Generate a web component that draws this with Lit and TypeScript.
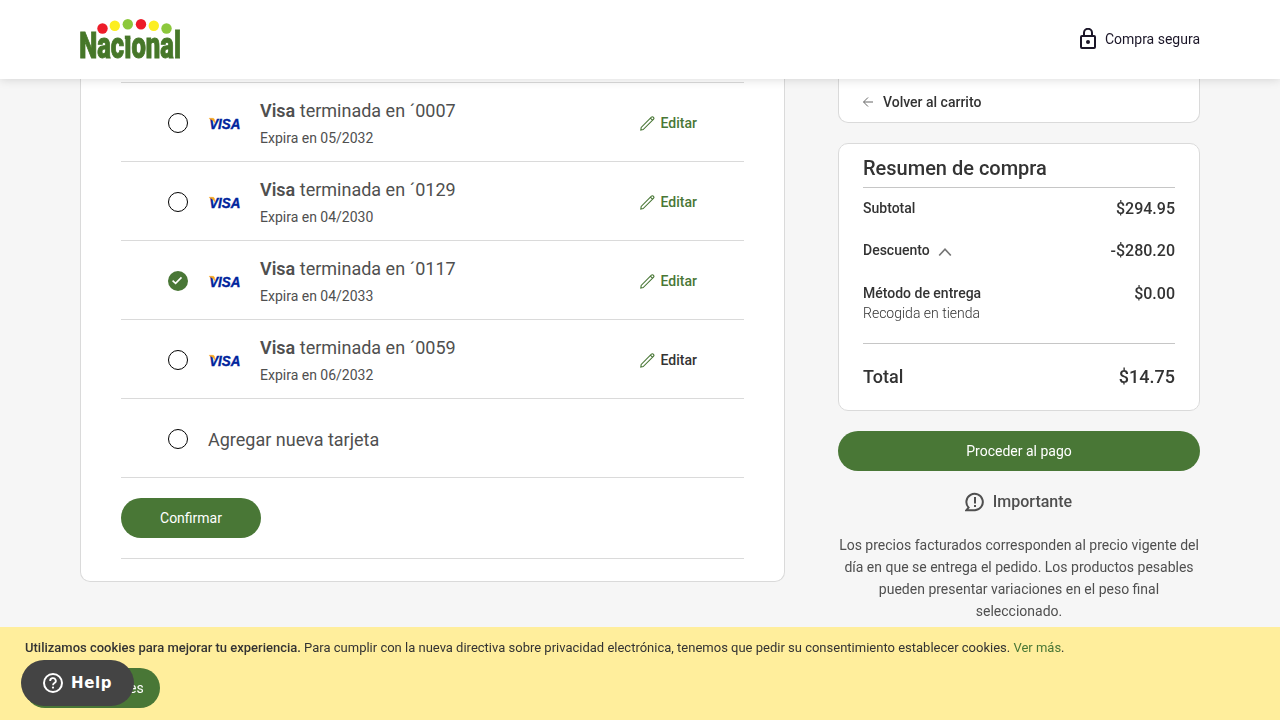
import { LitElement, html, css, svg } from "lit";
import { customElement, property, state } from "lit/decorators.js";
import { classMap } from "lit/directives/class-map.js";

interface Card {
  digits: string;
  expires: string;
}

const CARDS: Card[] = [
  { digits: "0007", expires: "05/2032" },
  { digits: "0129", expires: "04/2030" },
  { digits: "0117", expires: "04/2033" },
  { digits: "0059", expires: "06/2032" },
];

const LOGO_DOTS: [number, number, string][] = [
  [22.5, 9.5, "#ed1c29"],
  [34.8, 6.8, "#fcee21"],
  [47.8, 5.2, "#8cc83c"],
  [61, 5.2, "#ed1c29"],
  [73.8, 6.8, "#fcee21"],
  [86.5, 9.5, "#8cc83c"],
];

@customElement("site-logo")
class SiteLogo extends LitElement {
  static styles = css`
    :host { display: block; width: 101px; height: 42px; }
    svg { display: block; overflow: visible; }
    text { font-family: Roboto, sans-serif; font-weight: 900; font-size: 37.5px; fill: #467729; stroke: #467729; stroke-width: 1; }
  `;
  render() {
    return html`<svg width="101" height="42" viewBox="0 0 101 42">
      <text x="-0.8" y="39.4" textLength="101.8" lengthAdjust="spacingAndGlyphs">Nacıonal</text>
      <rect x="44.8" y="16.6" width="5.6" height="3.4" fill="#467729" />
      ${LOGO_DOTS.map(([x, y, c]) => svg`<circle cx=${x} cy=${y} r="5.2" fill=${c} />`)}
    </svg>`;
  }
}

@customElement("visa-mark")
class VisaMark extends LitElement {
  static styles = css`
    :host { display: block; width: 32px; height: 12px; }
    svg { display: block; overflow: visible; }
    text { font-family: "Liberation Sans", sans-serif; font-weight: 700; font-style: italic; font-size: 14.5px; fill: #00249c; stroke: #00249c; stroke-width: 0.4; }
  `;
  render() {
    return html`<svg width="32" height="12" viewBox="0 0 32 12">
      <text x="1.2" y="11.6" textLength="31.2" lengthAdjust="spacingAndGlyphs">VISA</text>
      <path d="M1 1.2H5Q6.2 1.2 6.5 2.4L7.2 6.2Q5.2 2.6 1 1.5Z" fill="#faa61a" stroke="#faa61a" stroke-width=".3" />
    </svg>`;
  }
}

@customElement("card-row")
class CardRow extends LitElement {
  @property({ attribute: false }) card?: Card;
  @property({ type: Boolean }) checked = false;
  @property({ type: Boolean }) dark = false;

  static styles = css`
    :host { display: flex; align-items: center; height: 79px; box-sizing: border-box; border-bottom: 1px solid #dadada; padding: 0 47px; }
    .radio { box-sizing: border-box; width: 20px; height: 20px; border: 1px solid #000; border-radius: 50%; margin: 2px 20px 0 0; background: #fff; flex: none; }
    .on { border: 0; background: #497736; }
    .radio svg { display: block; }
    visa-mark { margin: 2px 20px 0 0; }
    .info { flex: 1; color: #4f4f4f; margin-top: 4px; }
    .name { font-size: 18px; line-height: 28px; }
    .name b { font-weight: 600; }
    .exp { font-size: 14px; line-height: 26px; }
    .new { font-size: 18px; line-height: 28px; }
    .edit { display: flex; align-items: center; gap: 6px; margin-top: 2px; font-size: 14px; line-height: 20px; font-weight: 500; color: #497736; }
    .edit svg { display: block; }
    .dark { color: #333; }
  `;

  render() {
    return html`
      <span class=${classMap({ radio: true, on: this.checked })}>
        ${this.checked
          ? html`<svg width="20" height="20" viewBox="0 0 20 20"><path d="M4.6 9.6 7.6 12.4 13.5 6.4" fill="none" stroke="#fff" stroke-width="1.6" /></svg>`
          : null}
      </span>
      ${this.card
        ? html`<visa-mark></visa-mark>
            <div class="info">
              <div class="name"><b>Visa</b> terminada en ´${this.card.digits}</div>
              <div class="exp">Expira en ${this.card.expires}</div>
            </div>
            <span class=${classMap({ edit: true, dark: this.dark })}>
              <svg width="15" height="15" viewBox="0 0 15 15" fill="none" stroke="#497736" stroke-width="1.1">
                <path d="M.8 14 1.2 11.4 11.4 1.2Q12.2 .4 13 1L13.6 1.6Q14.4 2.4 13.4 3.4L3.2 13.6ZM10.4 2.2 12.4 4.2" />
              </svg>Editar</span>`
        : html`<div class="info new">Agregar nueva tarjeta</div>`}
    `;
  }
}

@customElement("app-root")
class AppRoot extends LitElement {
  @state() private selected = 2;

  static styles = css`
    :host { display: flex; flex-direction: column; width: 1280px; height: 720px; overflow: hidden; position: relative; background: #f6f6f6; font-family: Roboto, sans-serif; color: #333; }
    * { box-sizing: border-box; }
    svg { display: block; }
    header { height: 79px; flex: none; display: flex; align-items: center; justify-content: space-between; padding: 0 80px; background: #fff; box-shadow: 0 0 10px rgba(0, 0, 0, 0.16); position: relative; z-index: 1; will-change: transform; }
    .secure { display: flex; align-items: center; gap: 9px; font-size: 14px; line-height: 20px; color: #1b1628; margin-bottom: 2px; }
    main { flex: 1; min-height: 0; overflow: hidden; display: flex; align-items: flex-start; justify-content: space-between; padding: 0 80px; }
    .panel { background: #fff; border: 1px solid #dadada; }
    .cards { width: 705px; height: 503px; border-top: 0; border-radius: 0 0 10px 10px; padding: 3px 40px 0; }
    .list { border-top: 1px solid #dadada; }
    .confirm { padding: 20px 0; border-bottom: 1px solid #dadada; }
    .btn { display: flex; align-items: center; justify-content: center; height: 40px; border-radius: 20px; background: #497736; color: #fff; font-size: 14px; }
    .confirm .btn { width: 140px; }
    aside { width: 362px; will-change: transform; }
    .back { height: 44px; border-top: 0; border-radius: 0 0 10px 10px; padding: 2px 24px 0; display: flex; align-items: center; gap: 10px; font-size: 14px; font-weight: 500; }
    .summary { height: 268px; margin: 20px 0; border-radius: 10px; padding: 0 24px; }
    h2 { margin: 0; height: 44px; padding-top: 10px; font-size: 20px; line-height: 28px; font-weight: 500; border-bottom: 1px solid #c6c6c6; }
    .line { display: flex; justify-content: space-between; font-size: 14px; line-height: 20px; font-weight: 500; height: 42px; }
    .line .amount { font-size: 16px; padding-top: 1px; }
    .lines { padding-top: 10px; height: 156px; border-bottom: 1px solid #c6c6c6; }
    .desc { display: flex; gap: 8px; }
    .desc svg { margin-top: 6px; }
    .line.method { padding-top: 1px; }
    .light { font-weight: 300; }
    .total { display: flex; justify-content: space-between; padding-top: 21px; font-size: 18px; line-height: 24px; font-weight: 500; }
    .notice { display: flex; align-items: center; justify-content: center; gap: 8px; margin-top: 20px; height: 22px; font-size: 16px; line-height: 20px; font-weight: 500; color: #4f4f4f; padding: 0 1px 1px 0; }
    .notice svg { margin-top: 1px; }
    .note { margin: 21px 0 0; font-size: 14px; line-height: 22px; color: #4f4f4f; text-align: center; }
    footer { height: 93px; flex: none; position: relative; z-index: 1; background: #ffee9c; padding: 11px 25px 0; font-size: 13px; line-height: 20px; will-change: transform; }
    footer b { font-weight: 500; }
    footer .link { color: #497736; }
    footer p { margin: 0; }
    footer .btn { width: 135px; margin-top: 10px; padding-left: 1px; }
    .help { position: absolute; left: 21px; top: 660px; z-index: 2; width: 113px; height: 46px; border-radius: 23px; background: #444; color: #fff; display: flex; align-items: center; padding: 0 0 0 22px; gap: 8px; font: 700 15px "DejaVu Sans", sans-serif; letter-spacing: 0.6px; }
  `;

  render() {
    return html`
      <header>
        <site-logo></site-logo>
        <div class="secure">
          <svg width="16" height="21" viewBox="0 0 16 21" fill="none" stroke="#1b1628" stroke-width="2">
            <rect x="1" y="8" width="14" height="12" rx="1" />
            <path d="M4 8V4.8a4 4 0 0 1 8 0V8" />
            <circle cx="8" cy="14" r="2" fill="#1b1628" stroke="none" />
          </svg>
          Compra segura
        </div>
      </header>
      <main>
        <section class="panel cards">
          <div class="list">
            ${CARDS.map((c, i) => html`<card-row .card=${c} ?checked=${i === this.selected} ?dark=${i === 3} @click=${() => (this.selected = i)}></card-row>`)}
            <card-row ?checked=${this.selected === 4} @click=${() => (this.selected = 4)}></card-row>
          </div>
          <div class="confirm"><div class="btn">Confirmar</div></div>
        </section>
        <aside>
          <div class="panel back">
            <svg width="10" height="10" viewBox="0 0 10 10" fill="none" stroke="#666" stroke-width="1"><path d="M10 5H.7M5 .5.5 5 5 9.5" /></svg>
            Volver al carrito
          </div>
          <div class="panel summary">
            <h2>Resumen de compra</h2>
            <div class="lines">
              <div class="line"><span>Subtotal</span><span class="amount">$294.95</span></div>
              <div class="line">
                <span class="desc">Descuento
                  <svg width="14" height="12" viewBox="0 0 14 12" fill="none" stroke="#757575" stroke-width="1.7"><path d="M1.2 9.5 7 3.2 12.8 9.5" /></svg>
                </span>
                <span class="amount">-$280.20</span>
              </div>
              <div class="line method">
                <div>Método de entrega<div class="light">Recogida en tienda</div></div>
                <span class="amount">$0.00</span>
              </div>
            </div>
            <div class="total"><span>Total</span><span>$14.75</span></div>
          </div>
          <div class="btn">Proceder al pago</div>
          <div class="notice">
            <svg width="20" height="20" viewBox="0 0 20 20" fill="none" stroke="#4f4f4f" stroke-width="2">
              <path d="M10 18.2H1.4L3.6 15.6A8.2 8.2 0 1 1 10 18.2Z" />
              <path d="M10 5V11.4M10 13V15" />
            </svg>
            Importante
          </div>
          <p class="note">Los precios facturados corresponden al precio vigente del día en que se entrega el pedido. Los productos pesables pueden presentar variaciones en el peso final seleccionado.</p>
        </aside>
      </main>
      <footer>
        <p><b>Utilizamos cookies para mejorar tu experiencia.</b> Para cumplir con la nueva directiva sobre privacidad electrónica, tenemos que pedir su consentimiento establecer cookies. <span class="link">Ver más</span>.</p>
        <div class="btn">Permitir cookies</div>
      </footer>
      <div class="help">
        <svg width="20" height="20" viewBox="0 0 20 20" fill="none" stroke="#fff" stroke-width="2">
          <circle cx="10" cy="10" r="9" />
          <path d="M7.2 8A2.8 2.6 0 1 1 11.4 10Q10 10.9 10 12.2" stroke-width="1.8" />
          <circle cx="10" cy="14.6" r="1.1" fill="#fff" stroke="none" />
        </svg>
        Help
      </div>
    `;
  }
}
